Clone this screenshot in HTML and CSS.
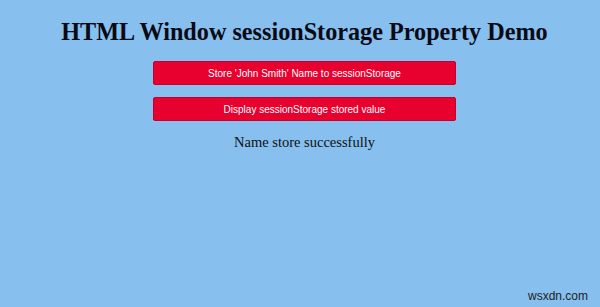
FILE: index.html
```html
<!DOCTYPE html>
<html lang="en">
<head>
    <meta charset="UTF-8">
    <meta name="viewport" content="width=device-width, initial-scale=1.0">
    <title>HTML Window sessionStorage Property</title>
    <link rel="stylesheet" href="styles.css">
</head>
<body>
    <h1>HTML Window sessionStorage Property Demo</h1>
    <button class="btn">Store 'John Smith' Name to sessionStorage</button>
    <button class="btn">Display sessionStorage stored value</button>
    <p class="msg">Name store successfully</p>
    <div class="mark">wsxdn.com</div>
</body>
</html>
```

FILE: styles.css
```css
*{
    margin: 0;
    padding: 0;
    box-sizing: border-box;
}
body{
    background-color: #87bfee;
    height: 307px;
    display: flex;
    flex-direction: column;
    align-items: center;
    padding-left: 9px;
    font-family: "Liberation Serif", serif;
    position: relative;
}
h1{
    font-size: 24.2px;
    line-height: 28px;
    margin-top: 18px;
    color: #0a0a14;
}
.btn{
    width: 303px;
    height: 24px;
    background-color: #e8002e;
    border: 1px solid #c40030;
    border-radius: 2px;
    color: #fff;
    font-family: "Liberation Sans", Arial, sans-serif;
    font-size: 10px;
    margin-top: 15px;
}
.btn + .btn{
    margin-top: 12px;
}
.msg{
    font-size: 14.5px;
    margin-top: 13px;
    color: #111;
}
.mark{
    position: absolute;
    right: 12px;
    bottom: 4px;
    font-family: "Liberation Sans", Arial, sans-serif;
    font-size: 12px;
    color: #222;
}
```
